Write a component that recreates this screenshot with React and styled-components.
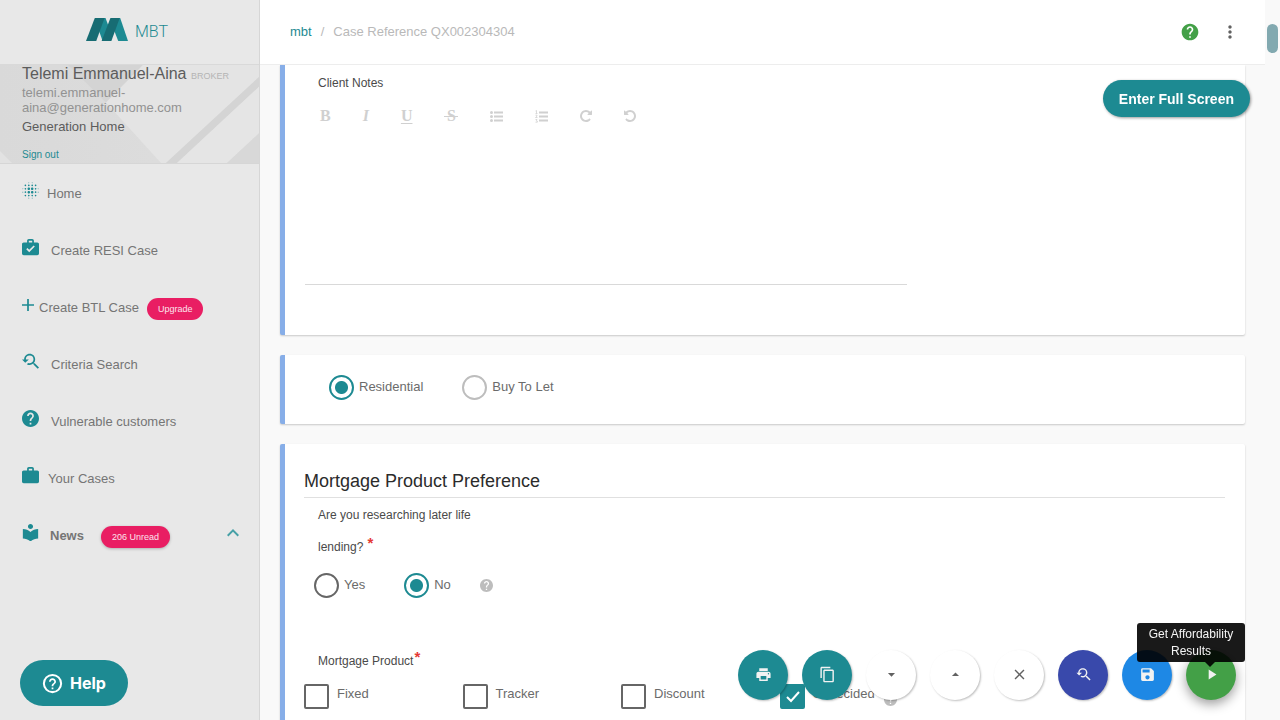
import React from 'react';
import styled, { createGlobalStyle } from 'styled-components';
import {
  MdBlurOn, MdHelp, MdAdd, MdYoutubeSearchedFor, MdWork, MdLocalLibrary, MdKeyboardArrowUp,
  MdMoreVert, MdPrint, MdContentCopy, MdArrowDropDown, MdArrowDropUp, MdClose, MdSave, MdPlayArrow,
} from 'react-icons/md';

const teal = '#1d8a92';

const GlobalStyle = createGlobalStyle`
  * { box-sizing: border-box; }
  body {
    margin: 0;
    background: #f9f9f9;
    color: #666;
    font: 13px/16px "Liberation Sans", Arial, sans-serif;
  }
  button { font: inherit; border: 0; padding: 0; background: none; cursor: pointer; }
  a { text-decoration: none; }
  svg { display: block; flex: none; }
`;

const Page = styled.div`
  display: grid;
  grid-template-columns: 260px minmax(0, 1fr) 15px;
  height: 100vh;
  overflow: hidden;
`;

/* Sidebar */
const Sidebar = styled.aside`
  background: #e8e8e8;
  border-right: 1px solid #d6d6d6;
`;
const Brand = styled.a`
  display: flex;
  align-items: center;
  justify-content: center;
  gap: 7px;
  height: 65px;
  padding: 0 5px 5px 0;
  border-bottom: 1px solid #d9d9d9;
  color: ${teal};
`;
const BrandName = styled.span`
  padding-top: 5px;
  font: 300 16px/20px Roboto, sans-serif;
`;
const UserPanel = styled.section`
  position: relative;
  height: 99px;
  padding: 0 20px 0 22px;
  border-bottom: 1px solid #d6d6d6;
`;
const Backdrop = styled.svg`
  position: absolute;
  inset: 0;
  width: 100%;
  height: 100%;
`;
const UserInfo = styled.div`
  position: relative;
`;
const UserName = styled.div`
  font-size: 16px;
  line-height: 18px;
  color: #5c5c5c;
  white-space: nowrap;
`;
const Role = styled.small`
  font-size: 9px;
  color: #b4b4b4;
`;
const Email = styled.div`
  line-height: 15px;
  color: #929292;
`;
const Company = styled.div`
  padding-top: 4px;
  color: #5c5c5c;
`;
const SignOut = styled.a`
  display: block;
  padding-top: 14px;
  font-size: 10px;
  line-height: 12px;
  color: ${teal};
`;
const Nav = styled.nav`
  padding-top: 1px;
`;
const NavItem = styled.a`
  display: flex;
  align-items: center;
  height: 57px;
  padding: 0 20px 0 22px;
  color: #757575;
  font-weight: ${(p) => (p.$bold ? 700 : 400)};
`;
const NavIcon = styled.span`
  margin-right: ${(p) => p.$gap}px;
  padding-bottom: 6px;
  color: ${teal};
`;
const Badge = styled.span`
  margin: 2px 0 0 ${(p) => p.$gap}px;
  padding: 0 11px;
  border-radius: 11px;
  background: #e91e63;
  box-shadow: ${(p) => (p.$raised ? '0 1px 3px rgba(0, 0, 0, .25)' : 'none')};
  color: #fce4ec;
  font-size: 9px;
  font-weight: 400;
  line-height: 22px;
`;
const Chevron = styled.span`
  margin-left: auto;
  padding-bottom: 6px;
  color: #46a0a6;
`;

/* Main column */
const Main = styled.main`
  display: flex;
  flex-direction: column;
  min-height: 0;
`;
const TopBar = styled.header`
  display: flex;
  align-items: center;
  flex: none;
  height: 65px;
  padding: 0 25px 1px 30px;
  background: #fff;
  border-bottom: 1px solid #ededed;
`;
const Crumbs = styled.nav`
  display: flex;
  gap: 9px;
  color: #b9b9b9;
  a { color: ${teal}; }
`;
const TopActions = styled.div`
  display: flex;
  align-items: center;
  gap: 20px;
  margin-left: auto;
`;
const IconButton = styled.button`
  color: ${(p) => p.$color};
`;
const Content = styled.div`
  display: flex;
  flex-direction: column;
  gap: 20px;
  flex: 1;
  min-height: 0;
  overflow: hidden;
  padding: 0 20px;
`;
const Card = styled.section`
  flex: none;
  padding: ${(p) => p.$pad};
  background: #fff;
  border-left: 5px solid #87aee8;
  border-radius: ${(p) => (p.$cut ? '0 0 2px 2px' : '2px')};
  box-shadow: 0 1px 2px rgba(0, 0, 0, .2);
`;
const FieldLabel = styled.div`
  padding-left: 14px;
  font-size: 12px;
  line-height: 32px;
  color: #4a4a4a;
`;
const NotesLabel = styled.label`
  display: block;
  padding-left: 13px;
  font-size: 12px;
  line-height: 16px;
  color: #4a4a4a;
`;
const Required = styled.span`
  margin-left: ${(p) => p.$gap}px;
  color: #e53935;
  font-size: 15px;
  font-weight: 700;
  line-height: 16px;
  vertical-align: 3px;
`;
const Toolbar = styled.div`
  display: flex;
  align-items: center;
  gap: 32px;
  height: 50px;
  padding-left: 15px;
`;
const Tool = styled.button`
  color: #d0d0d0;
  font: ${(p) => p.$font || '700 16px'}/18px "Liberation Serif", serif;
  text-decoration: ${(p) => p.$line || 'none'};
  text-underline-offset: 2px;
`;
const StrikeTool = styled(Tool)`
  position: relative;
  width: 14px;
  &::after {
    content: '';
    position: absolute;
    inset: 9px 0 auto;
    border-top: 1px solid currentColor;
  }
`;
const Notes = styled.textarea`
  display: block;
  width: 602px;
  max-width: 100%;
  height: 144px;
  padding: 8px 13px;
  border: 0;
  border-bottom: 1px solid #d9d9d9;
  outline: 0;
  resize: none;
  background: transparent;
  font: inherit;
`;
const Heading = styled.h2`
  margin: 0 0 1px;
  padding-bottom: 4px;
  border-bottom: 1px solid #e0e0e0;
  color: #2b2b2b;
  font-size: 18px;
  font-weight: 400;
  line-height: 24px;
`;
const Choices = styled.div`
  display: flex;
  align-items: center;
  gap: 39px;
  padding: ${(p) => p.$pad};
`;
const Choice = styled.label`
  display: flex;
  gap: 5px;
  line-height: 23px;
  color: #6b6b6b;
`;
const Radio = styled.input`
  appearance: none;
  width: 25px;
  height: 25px;
  margin: 0;
  border: 2px solid ${(p) => (p.$soft ? '#bdbdbd' : '#666')};
  border-radius: 50%;
  &:checked {
    border-color: ${teal};
    background: radial-gradient(circle, ${teal} 6px, transparent 7px);
  }
`;
const Hint = styled.span`
  color: #bdbdbd;
`;
const ChoiceHint = styled(Hint)`
  margin-left: -10px;
`;
const CheckGrid = styled.div`
  display: grid;
  grid-template-columns: repeat(4, 1fr);
  max-width: 634px;
  padding-top: 7px;
`;
const CheckCell = styled.div`
  display: flex;
  align-items: flex-end;
  gap: 9px;
  ${Hint} { padding-bottom: 3px; }
`;
const CheckLabel = styled.label`
  display: flex;
  gap: 8px;
  line-height: 20px;
  color: #6b6b6b;
`;
const TickBox = styled.span`
  display: grid;
  width: 25px;
  height: 25px;
  > * { grid-area: 1 / 1; }
  svg { z-index: 1; pointer-events: none; }
`;
const Tick = styled.input`
  appearance: none;
  width: 25px;
  height: 25px;
  margin: 0;
  border: 2px solid #666;
  border-radius: 2px;
  &:checked { border-color: ${teal}; background: ${teal}; }
`;
const Track = styled.div`
  padding: 24px 2px 0;
`;
const Thumb = styled.div`
  height: 29px;
  border-radius: 6px;
  background: #82a9b0;
`;

/* Floating controls */
const FullScreen = styled.button`
  position: fixed;
  top: 80px;
  right: 30px;
  padding: 2px 16px 0;
  border-radius: 19px;
  background: ${teal};
  box-shadow: 1px 1px 3px rgba(0, 0, 0, .4);
  color: #fff;
  font-size: 14px;
  font-weight: 700;
  line-height: 35px;
`;
const HelpButton = styled.button`
  position: fixed;
  left: 20px;
  bottom: 14px;
  display: flex;
  align-items: center;
  gap: 7px;
  height: 46px;
  padding: 0 22px;
  border-radius: 23px;
  background: ${teal};
  color: #fff;
  font: 700 16px/20px Inter, sans-serif;
`;
const Actions = styled.div`
  position: fixed;
  right: 44px;
  bottom: 20px;
  display: flex;
  gap: 14px;
`;
const Fab = styled.button`
  display: flex;
  align-items: center;
  justify-content: center;
  width: 50px;
  height: 50px;
  padding-bottom: 1px;
  border-radius: 50%;
  background: ${(p) => p.$bg || '#fff'};
  color: ${(p) => (p.$bg ? '#f2f2f2' : '#616161')};
  box-shadow: ${(p) => (p.$active ? '0 4px 12px rgba(0, 0, 0, .4)' : '1px 1px 2px rgba(0, 0, 0, .25)')};
`;
const Tooltip = styled.div`
  position: fixed;
  right: 35px;
  bottom: 58px;
  width: 108px;
  padding: 3px 8px 2px;
  border-radius: 3px;
  background: rgba(0, 0, 0, .9);
  color: #f5f5f5;
  font-size: 12px;
  line-height: 17px;
  text-align: center;
  &::after {
    content: '';
    position: absolute;
    top: 100%;
    right: 30px;
    border: 5px solid transparent;
    border-top-color: rgba(0, 0, 0, .9);
  }
`;

const Logo = () => (
  <svg width="42" height="23" viewBox="0 0 43 23" preserveAspectRatio="none" aria-hidden="true">
    <path d="M18 0h2l5 13-4 10h-4L13 12z" fill={teal} />
    <path d="M33 0h2l8 23H33l-4-10z" fill={teal} />
    <path d="M9 0h10l-8.500 23H0z" fill="#176c73" />
    <path d="M25 0h9.500L26 23H16z" fill="#176c73" />
  </svg>
);

const CaseCheck = () => (
  <svg width="17" height="17" viewBox="2 2 20 20" fill="currentColor" aria-hidden="true">
    <path
      fillRule="evenodd"
      d="M10.500 17.500L7 14l1.410-1.410 2.090 2.080 5.180-5.170 1.410 1.410zM10 4h4v2h-4zM20 6h-4V4c0-1.110-.9-2-2-2h-4c-1.110 0-2 .89-2 2v2H4c-1.110 0-2 .89-2 2v11a2 2 0 0 0 2 2h16a2 2 0 0 0 2-2V8c0-1.110-.9-2-2-2z"
    />
  </svg>
);

const BulletList = () => (
  <svg width="13" height="11" viewBox="0 0 13 11" fill="currentColor" aria-hidden="true">
    <circle cx="1.500" cy="1.500" r="1.500" />
    <circle cx="1.500" cy="5.500" r="1.500" />
    <circle cx="1.500" cy="9.500" r="1.500" />
    <path d="M4 .5h9v2H4zM4 4.500h9v2H4zM4 8.500h9v2H4z" />
  </svg>
);

const NumberList = () => (
  <svg width="13" height="13" viewBox="0 0 13 13" aria-hidden="true">
    <path d="M4 1.500h9v2H4zM4 5.500h9v2H4zM4 9.500h9v2H4z" fill="currentColor" />
    <path
      d="M.5 1L1.500.5v3M.5 3.500h2M.5 5.200h1.500v1L.5 7.500h2M.5 9.500h1.500l-.7 1.200 1 .3v1.200H.5"
      fill="none" stroke="currentColor" strokeWidth=".8"
    />
  </svg>
);

const Rotate = ({ flip }) => (
  <svg width="12" height="12" viewBox="128 128 1536 1536" fill="currentColor" aria-hidden="true">
    <path
      transform={flip ? 'translate(1792 0) scale(-1 1)' : undefined}
      d="M1664 256v448q0 26-19 45t-45 19h-448q-42 0-59-40-17-39 14-69l138-138q-148-137-349-137-104 0-198.500 40.500t-163.500 109.500-109.500 163.500-40.500 198.500 40.500 198.500 109.500 163.500 163.500 109.500 198.500 40.500q119 0 225-52t179-147q7-10 23-12 15 0 25 9l137 138q9 8 9.500 20.500t-7.500 22.500q-109 132-264 204.500t-327 72.500q-156 0-298-61t-245-164-164-245-61-298 61-298 164-245 245-164 298-61q147 0 284.500 55.500t244.500 156.500l130-129q29-31 70-14 39 17 39 59z"
    />
  </svg>
);

const HelpRing = () => (
  <svg width="21" height="21" viewBox="0 0 24 24" fill="currentColor" aria-hidden="true">
    <path d="M11 16.500h2v2h-2v-2zm1-15.500A11 11 0 1 0 12 23 11 11 0 0 0 12 1zm0 19.700A8.700 8.700 0 1 1 12 3.300a8.700 8.700 0 0 1 0 17.400zM12 6c-2.210 0-4 1.790-4 4h2c0-1.100.9-2 2-2s2 .9 2 2c0 2-3 1.750-3 5h2c0-2.250 3-2.500 3-5 0-2.210-1.790-4-4-4z" />
  </svg>
);

const PanelBackdrop = () => (
  <Backdrop viewBox="0 0 259 99" preserveAspectRatio="none" aria-hidden="true">
    <defs>
      <linearGradient id="panelBase" x1="0" y1="0" x2="1" y2="0">
        <stop offset="0" stopColor="#d9d9d9" />
        <stop offset="1" stopColor="#dedede" />
      </linearGradient>
    </defs>
    <rect width="259" height="99" fill="url(#panelBase)" />
    <path d="M68 0h75l-37 38z" fill="#d4d4d4" />
    <path d="M143 0h116v12l-93 87h-5L106 38z" fill="#e4e4e4" />
    <path d="M259 12v10l-82 77h-11z" fill="#d4d4d4" />
    <path d="M259 22v47l-32 30h-50z" fill="#e5e5e5" />
    <path d="M259 69v30h-32z" fill="#d8d8d8" />
    <path d="M0 87l12 12H0z" fill="#e2e2e2" />
  </Backdrop>
);

const glyph = { size: 17, viewBox: '2 2 20 20' };

const navItems = [
  { label: 'Home', icon: <MdBlurOn {...glyph} />, gap: 8 },
  { label: 'Create RESI Case', icon: <CaseCheck />, gap: 12 },
  { label: 'Create BTL Case', icon: <MdAdd size={12} viewBox="5 5 14 14" />, gap: 5, badge: 'Upgrade', badgeGap: 8 },
  { label: 'Criteria Search', icon: <MdYoutubeSearchedFor {...glyph} />, gap: 12 },
  { label: 'Vulnerable customers', icon: <MdHelp {...glyph} />, gap: 12 },
  { label: 'Your Cases', icon: <MdWork {...glyph} />, gap: 9 },
  {
    label: 'News', icon: <MdLocalLibrary size={17} viewBox="3 2 18 20" />, gap: 11,
    badge: '206 Unread', badgeGap: 17, raised: true, bold: true, open: true,
  },
];

const products = [
  { label: 'Fixed' },
  { label: 'Tracker' },
  { label: 'Discount' },
  { label: 'Undecided', checked: true, hint: true },
];

const actions = [
  { name: 'Print', bg: teal, icon: <MdPrint size={17} /> },
  { name: 'Copy', bg: teal, icon: <MdContentCopy size={17} /> },
  { name: 'Move down', icon: <MdArrowDropDown size={17} /> },
  { name: 'Move up', icon: <MdArrowDropUp size={17} /> },
  { name: 'Close', icon: <MdClose size={17} /> },
  { name: 'Search again', bg: '#3949ab', icon: <MdYoutubeSearchedFor size={17} /> },
  { name: 'Save', bg: '#1e88e5', icon: <MdSave size={17} /> },
  { name: 'Get Affordability Results', bg: '#43a047', icon: <MdPlayArrow size={17} />, active: true },
];

export default function App() {
  return (
    <>
      <GlobalStyle />
      <Page>
        <Sidebar>
          <Brand href="#">
            <Logo />
            <BrandName>MBT</BrandName>
          </Brand>
          <UserPanel>
            <PanelBackdrop />
            <UserInfo>
              <UserName>Telemi Emmanuel-Aina <Role>BROKER</Role></UserName>
              <Email>telemi.emmanuel-<br />aina@generationhome.com</Email>
              <Company>Generation Home</Company>
              <SignOut href="#">Sign out</SignOut>
            </UserInfo>
          </UserPanel>
          <Nav>
            {navItems.map((item) => (
              <NavItem href="#" key={item.label} $bold={item.bold}>
                <NavIcon $gap={item.gap}>{item.icon}</NavIcon>
                {item.label}
                {item.badge && <Badge $gap={item.badgeGap} $raised={item.raised}>{item.badge}</Badge>}
                {item.open && <Chevron><MdKeyboardArrowUp size={12} viewBox="6 6 12 12" /></Chevron>}
              </NavItem>
            ))}
          </Nav>
        </Sidebar>

        <Main>
          <TopBar>
            <Crumbs aria-label="Breadcrumb">
              <a href="#">mbt</a>
              <span>/</span>
              <span>Case Reference QX002304304</span>
            </Crumbs>
            <TopActions>
              <IconButton $color="#43a047" aria-label="Help"><MdHelp size={20} /></IconButton>
              <IconButton $color="#616161" aria-label="More"><MdMoreVert size={20} /></IconButton>
            </TopActions>
          </TopBar>
          <Content>
            <Card $cut $pad="10px 20px 50px">
              <NotesLabel htmlFor="notes">Client Notes</NotesLabel>
              <Toolbar>
                <Tool aria-label="Bold">B</Tool>
                <Tool aria-label="Italic" $font="italic 700 16px">I</Tool>
                <Tool aria-label="Underline" $line="underline">U</Tool>
                <StrikeTool aria-label="Strikethrough">S</StrikeTool>
                <Tool aria-label="Bulleted list"><BulletList /></Tool>
                <Tool aria-label="Numbered list"><NumberList /></Tool>
                <Tool aria-label="Redo"><Rotate /></Tool>
                <Tool aria-label="Undo"><Rotate flip /></Tool>
              </Toolbar>
              <Notes id="notes" />
            </Card>

            <Card $pad="20px 20px 24px">
              <Choices $pad="0 0 0 24px">
                <Choice><Radio type="radio" name="kind" $soft defaultChecked />Residential</Choice>
                <Choice><Radio type="radio" name="kind" $soft />Buy To Let</Choice>
              </Choices>
            </Card>

            <Card $pad="25px 20px 40px 19px">
              <Heading>Mortgage Product Preference</Heading>
              <FieldLabel>Are you researching later life</FieldLabel>
              <FieldLabel>lending?<Required $gap={4}>*</Required></FieldLabel>
              <Choices $pad="10px 0 47px 10px">
                <Choice><Radio type="radio" name="later" />Yes</Choice>
                <Choice><Radio type="radio" name="later" defaultChecked />No</Choice>
                <ChoiceHint><MdHelp size={13} viewBox="2 2 20 20" /></ChoiceHint>
              </Choices>
              <FieldLabel>Mortgage Product<Required $gap={1}>*</Required></FieldLabel>
              <CheckGrid>
                {products.map((p) => (
                  <CheckCell key={p.label}>
                    <CheckLabel>
                      <TickBox>
                        <Tick type="checkbox" defaultChecked={p.checked} />
                        {p.checked && (
                          <svg width="25" height="25" viewBox="0 0 25 25" fill="none" stroke="#fff" strokeWidth="2" aria-hidden="true">
                            <path d="M7 13l4 4 8-9" />
                          </svg>
                        )}
                      </TickBox>
                      {p.label}
                    </CheckLabel>
                    {p.hint && <Hint><MdHelp size={13} viewBox="2 2 20 20" /></Hint>}
                  </CheckCell>
                ))}
              </CheckGrid>
            </Card>
          </Content>
        </Main>

        <Track><Thumb /></Track>
      </Page>

      <FullScreen>Enter Full Screen</FullScreen>
      <HelpButton><HelpRing />Help</HelpButton>
      <Actions>
        {actions.map((a) => (
          <Fab key={a.name} aria-label={a.name} $bg={a.bg} $active={a.active}>{a.icon}</Fab>
        ))}
      </Actions>
      <Tooltip role="tooltip">Get Affordability Results</Tooltip>
    </>
  );
}
